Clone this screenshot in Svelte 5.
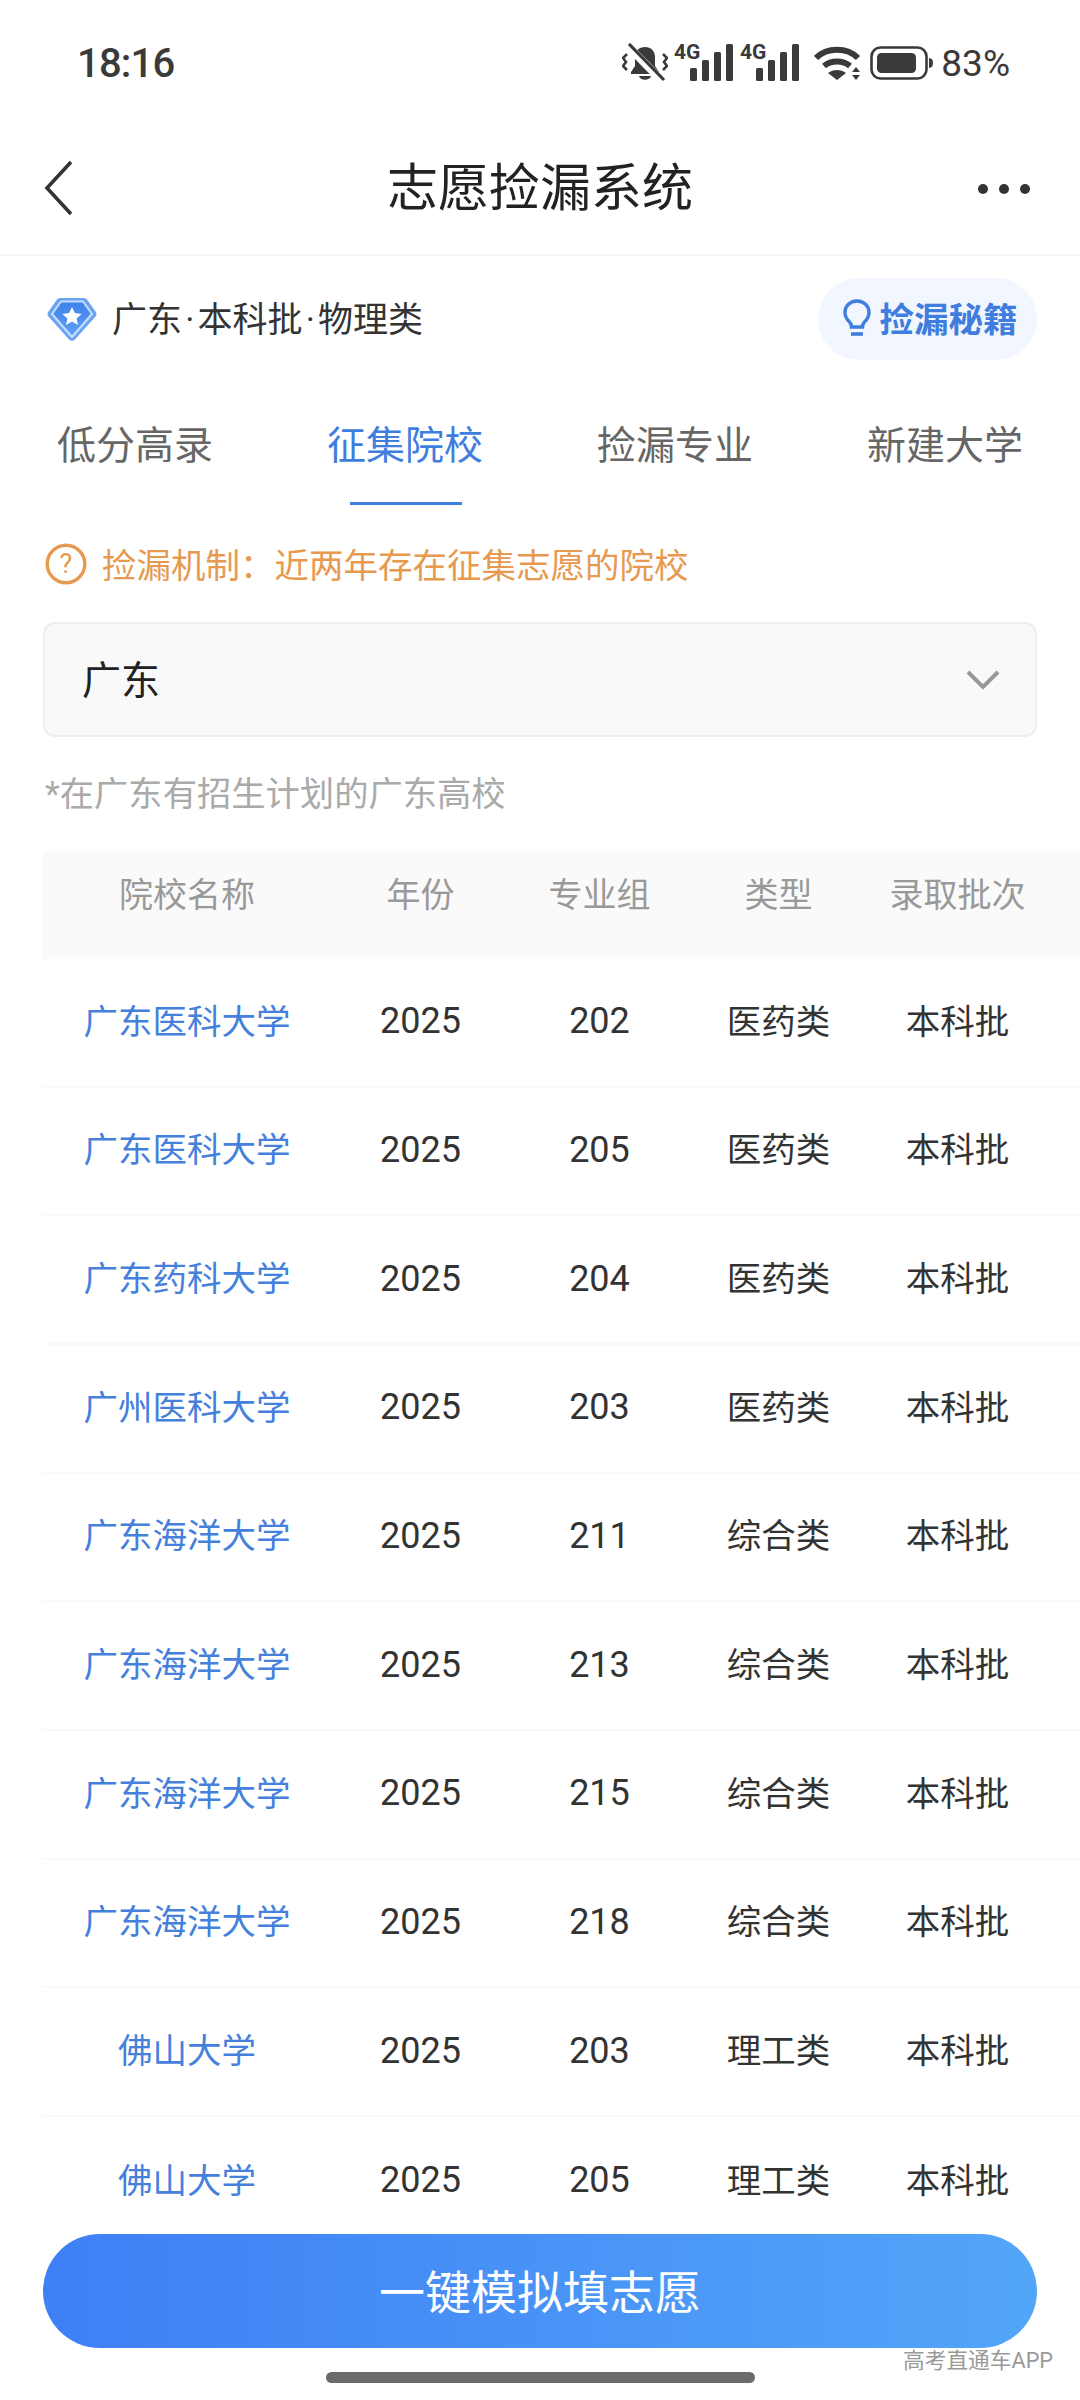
<script>
  const rows = [
    ['广东医科大学','202','医药类'],['广东医科大学','205','医药类'],['广东药科大学','204','医药类'],['广州医科大学','203','医药类'],
    ['广东海洋大学','211','综合类'],['广东海洋大学','213','综合类'],['广东海洋大学','215','综合类'],['广东海洋大学','218','综合类'],
    ['佛山大学','203','理工类'],['佛山大学','205','理工类']
  ];
  const tabs = ['低分高录','征集院校','捡漏专业','新建大学'];
</script>

<div class="page">
  <header class="status">
    <span class="time">18:16</span>
    <div class="sys">
      <svg class="bell" width="46" height="40" viewBox="0 0 46 40">
        <path d="M23 4c-6 0-10 4-10 10v9l-4 6v2h28v-2l-4-6v-9c0-6-4-10-10-10z" fill="#3a3a3a"/>
        <path d="M17 33h12c-1 5-11 5-12 0z" fill="#3a3a3a"/>
        <path d="M6 3 39 37" stroke="#fff" stroke-width="8"/>
        <path d="M7 1 42 37" stroke="#3a3a3a" stroke-width="3.200"/>
        <path d="M5 11 1 15l3 4-3 4 4 4M41 11l4 4-3 4 3 4-4 4" fill="none" stroke="#3a3a3a" stroke-width="2.600"/>
      </svg>
      <svg class="sig" width="60" height="41" viewBox="0 -3 60 41">
        <text x="0" y="14.500" class="g4">4G</text>
        <rect x="16" y="24" width="7" height="13" rx="1.500"/><rect x="28" y="16" width="7" height="21" rx="1.500"/><rect x="40" y="8" width="7" height="29" rx="1.500"/><rect x="52" y="0" width="7" height="37" rx="1.500"/>
      </svg>
      <svg class="sig" width="60" height="41" viewBox="0 -3 60 41">
        <text x="0" y="14.500" class="g4">4G</text>
        <rect x="16" y="24" width="7" height="13" rx="1.500"/><rect x="28" y="16" width="7" height="21" rx="1.500"/><rect x="40" y="8" width="7" height="29" rx="1.500"/><rect x="52" y="0" width="7" height="37" rx="1.500"/>
      </svg>
      <svg class="wifi" width="48" height="36" viewBox="0 0 48 36">
        <path d="M2 13C13 2 33 2 44 13" fill="none" stroke="#3a3a3a" stroke-width="6"/>
        <path d="M10 21c7-6 19-6 26 0" fill="none" stroke="#3a3a3a" stroke-width="6"/>
        <path d="M14 28c5-4 13-4 18 0l-9 7z" fill="#3a3a3a"/>
        <path d="M42 22l4 5h-8zM42 35l4-5h-8z" fill="#3a3a3a"/>
      </svg>
      <svg class="batt" width="64" height="34" viewBox="0 0 64 34">
        <rect x="1.500" y="1.500" width="55" height="31" rx="9" fill="none" stroke="#3a3a3a" stroke-width="2.600"/>
        <rect x="7" y="7" width="39" height="20" rx="4.500" fill="#3a3a3a"/>
        <path d="M59 12c3 .5 4 2 4 5s-1 4.500-4 5z" fill="#3a3a3a"/>
      </svg>
      <span class="pct">83%</span>
    </div>
  </header>

  <nav class="nav">
    <svg class="back" width="30" height="56" viewBox="0 0 30 56"><path d="M27 2 3 28l24 26" fill="none" stroke="#333" stroke-width="3.600"/></svg>
    <h1>志愿捡漏系统</h1>
    <div class="more"><i></i><i></i><i></i></div>
  </nav>

  <div class="info">
    <div class="who">
      <svg width="50" height="44" viewBox="0 0 50 44">
        <defs><linearGradient id="bd" x1="0" y1="0" x2="0" y2="1"><stop offset="0" stop-color="#3f80ea"/><stop offset="1" stop-color="#5fa2f7"/></linearGradient></defs>
        <path d="M13 1h24a4 4 0 0 1 3 1.500l8.500 12a4 4 0 0 1 0 5L28 42.500a4 4 0 0 1-6 0L1.500 19.500a4 4 0 0 1 0-5L10 2.500A4 4 0 0 1 13 1z" fill="#6ba4f3"/>
        <path d="M14 4.500h22l9 12.500-20 23L5 17z" fill="url(#bd)" stroke="#c9defb" stroke-width="2" stroke-linejoin="round"/>
        <path d="M25 10l2.900 6.100 6.700.8-5 4.500 1.400 6.600-6-3.400-6 3.400 1.400-6.600-5-4.500 6.700-.8z" fill="#fff"/>
      </svg>
      <span>广东 · 本科批 · 物理类</span>
    </div>
    <div class="pill">
      <svg width="28" height="40" viewBox="0 0 28 40"><path d="M14 2C7 2 2 7 2 13.500c0 4 2 7 4.500 9.500 1.500 1.500 2 3 2 5h11c0-2 .5-3.500 2-5 2.500-2.500 4.500-5.500 4.500-9.500C26 7 21 2 14 2z" fill="none" stroke="#3f7ede" stroke-width="3.400"/><path d="M8 35h12" stroke="#3f7ede" stroke-width="3.600"/></svg>
      <span>捡漏秘籍</span>
    </div>
  </div>

  <div class="tabs">
    {#each tabs as t, i}
      <div class="tab" class:on={i === 1}>{t}</div>
    {/each}
  </div>

  <div class="tip">
    <svg width="42" height="42" viewBox="0 0 42 42"><circle cx="21" cy="21" r="18.800" fill="none" stroke="#e79a4f" stroke-width="3.400"/><text x="21" y="30" text-anchor="middle" class="q">?</text></svg>
    <span>捡漏机制：近两年存在征集志愿的院校</span>
  </div>

  <div class="select">
    <span>广东</span>
    <svg width="34" height="20" viewBox="0 0 34 20"><path d="M2 2l15 15L32 2" fill="none" stroke="#999" stroke-width="4"/></svg>
  </div>

  <p class="note">*在广东有招生计划的广东高校</p>

  <section class="table">
    <div class="row head">
      <span>院校名称</span><span>年份</span><span>专业组</span><span>类型</span><span>录取批次</span>
    </div>
    {#each rows as r, i}
      <div class="row" class:last={i === rows.length - 1}>
        <span class="cjk school">{r[0]}</span><span>2025</span><span>{r[1]}</span><span class="cjk">{r[2]}</span><span class="cjk">本科批</span>
      </div>
    {/each}
  </section>

  <footer class="foot">
    <button>一键模拟填志愿</button>
    <div class="mark">高考直通车APP</div>
    <div class="homebar"></div>
  </footer>
</div>

<style>
  :global(body) { margin: 0; background: #fff; }
  .page {
    position: relative; width: 1080px; height: 2400px; overflow: hidden; background: #fff; color: #333;
    font-family: Roboto, "Noto Sans CJK SC", sans-serif;
  }
  .status { height: 126px; display: flex; align-items: center; justify-content: space-between; padding: 0 70px 0 77px; box-sizing: border-box; }
  .time { font-size: 40px; font-weight: 500; color: #3a3a3a; letter-spacing: -.8px; }
  .sys { display: flex; align-items: center; }
  .sys svg { fill: #3a3a3a; display: block; }
  .bell { margin-right: 6px; }
  .sig { margin-right: 6px; margin-top: -3px; }
  .wifi { margin: 0 8px 0 8px; }
  .batt { margin-right: 7px; }
  .g4 { font: 700 21px Roboto, sans-serif; fill: #3a3a3a; }
  .pct { font-size: 37px; color: #3a3a3a; }
  .nav { height: 128px; position: relative; display: flex; align-items: center; justify-content: center; border-bottom: 2px solid #f5f5f5; }
  .nav h1 { margin: 0; font-size: 51px; font-weight: 400; color: #222; line-height: 1; padding-bottom: 4px; }
  .back { position: absolute; left: 44px; top: 34px; }
  .more { position: absolute; right: 50px; top: 58px; display: flex; gap: 11px; }
  .more i { width: 10px; height: 10px; border-radius: 50%; background: #333; display: block; }
  .info { display: flex; align-items: center; justify-content: space-between; padding: 22px 43px 0 47px; }
  .who { display: flex; align-items: center; gap: 15px; font-size: 35px; color: #333; }
  .who span { word-spacing: -5.500px; padding-bottom: 5px; }
  .pill { width: 219px; height: 82px; border-radius: 41px; background: #f2f6fe; display: flex; align-items: center; justify-content: center; gap: 9px; color: #3f7ede; font-size: 34.500px; font-weight: 700; padding-left: 5px; box-sizing: border-box; }
  .pill span { padding-bottom: 4px; }
  .tabs { display: grid; grid-template-columns: repeat(4, 270px); margin-top: 30px; }
  .tab { position: relative; height: 115px; display: flex; align-items: center; justify-content: center; font-size: 39px; color: #666; padding-bottom: 11px; box-sizing: border-box; }
  .tab.on { color: #3f7ede; }
  .tab.on::after { content: ""; position: absolute; left: 80px; bottom: 0; width: 112px; height: 3px; background: #3f7ede; }
  .tip { display: flex; align-items: center; gap: 15px; margin: 37px 0 0 45px; height: 44px; color: #e79a4f; font-size: 34.500px; }
  .tip span { padding-bottom: 3px; }
  .q { font: 400 27px Roboto, sans-serif; fill: #e79a4f; }
  .select { margin: 36px 43px 0; height: 115px; box-sizing: border-box; border: 2px solid #eeeeee; border-radius: 12px; background: #f9f9f9; display: flex; align-items: center; justify-content: space-between; padding: 0 35px 0 37px; font-size: 39px; color: #222; }
  .select span { padding-bottom: 6px; }
  .note { margin: 35px 0 0 45px; font-size: 34.300px; line-height: 44px; color: #aaa; }
  .table { margin: 35px 0 0 43px; }
  .row { display: grid; grid-template-columns: 288px repeat(4, 179px); height: 128.670px; align-items: center; justify-items: center; box-sizing: border-box; border-bottom: 2px solid #f9f9f9; font-size: 36px; color: #333; padding-bottom: 2px; }
  .row.last { border-bottom: 0; }
  .cjk { font-size: 34.500px; padding-bottom: 5px; }
  .head { height: 108px; background: #fafafa; color: #999; font-size: 34px; border-bottom: 0; padding-bottom: 26px; width: 1037px; }
  .school { color: #4480dc; }
  .foot { position: absolute; left: 0; right: 0; bottom: 0; height: 166px; }
  .foot button { position: absolute; left: 43px; top: 0; width: 994px; height: 114px; border: 0; border-radius: 57px; background: linear-gradient(90deg, #3f7ff5, #52a6f8); color: #fff; font-size: 46px; font-family: inherit; padding: 0 0 5px; }
  .mark { position: absolute; right: 27px; top: 110px; font-size: 21.700px; line-height: 34px; color: #999; }
  .homebar { position: absolute; left: 326px; top: 138px; width: 429px; height: 11px; border-radius: 6px; background: #6b6b6b; }
</style>
